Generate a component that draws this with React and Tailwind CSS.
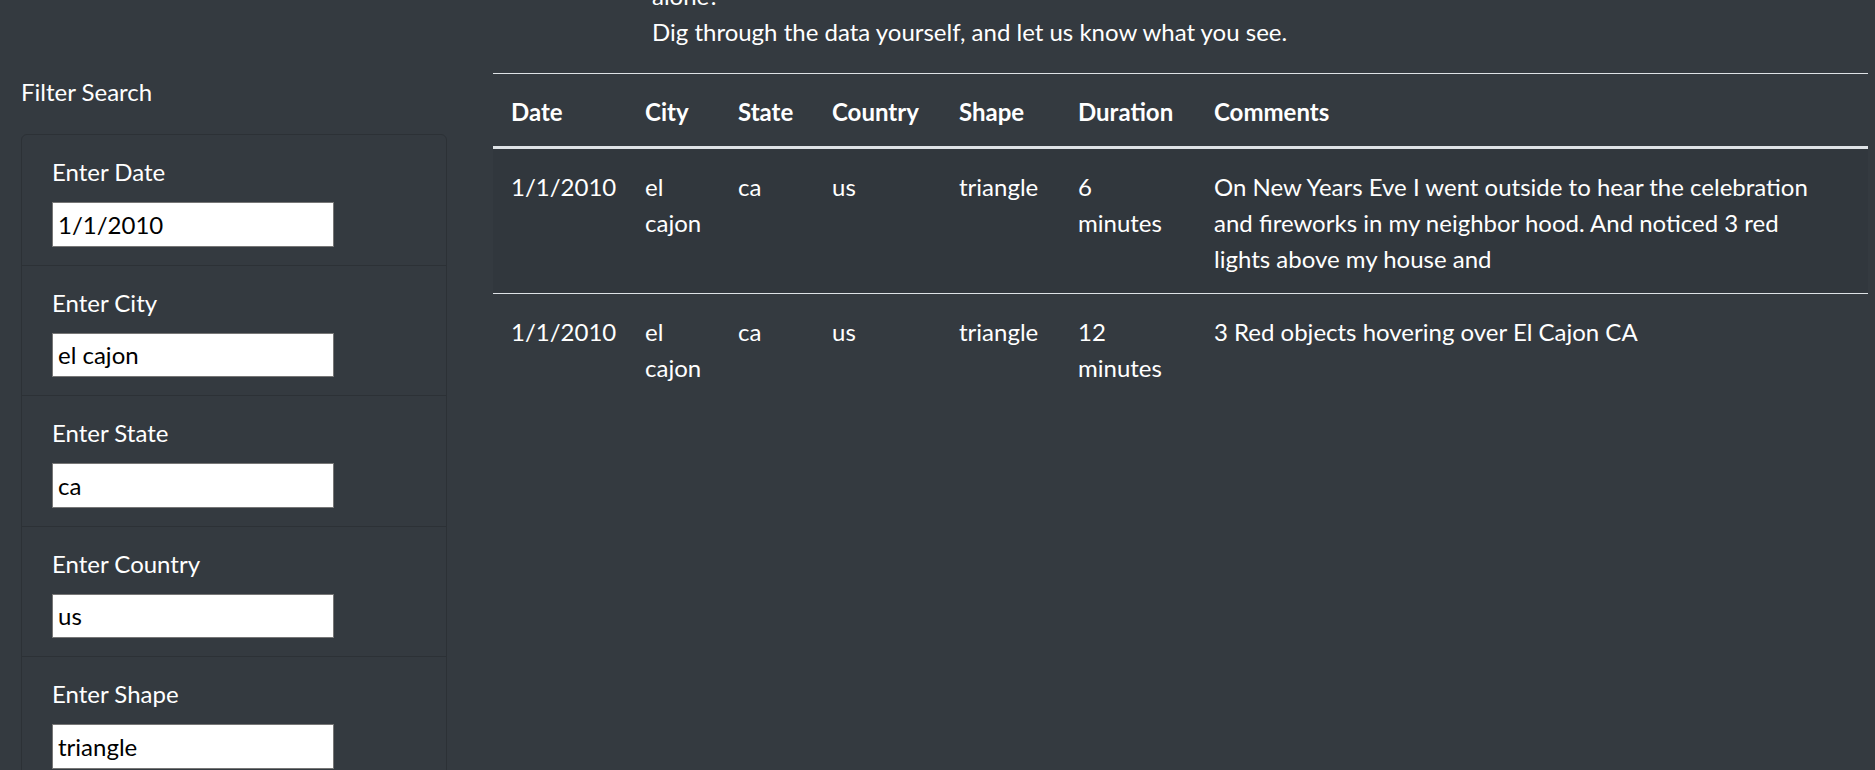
import React from "react";

const FILTERS = [
  { label: "Enter Date", value: "1/1/2010" },
  { label: "Enter City", value: "el cajon" },
  { label: "Enter State", value: "ca" },
  { label: "Enter Country", value: "us" },
  { label: "Enter Shape", value: "triangle" },
];

const COLUMNS = [
  { label: "Date", width: "w-[134px]" },
  { label: "City", width: "w-[93px]" },
  { label: "State", width: "w-[94px]" },
  { label: "Country", width: "w-[127px]" },
  { label: "Shape", width: "w-[119px]" },
  { label: "Duration", width: "w-[136px]" },
  { label: "Comments", width: "" },
];

const ROWS = [
  {
    date: "1/1/2010",
    city: "el cajon",
    state: "ca",
    country: "us",
    shape: "triangle",
    duration: "6 minutes",
    comments: [
      "On New Years Eve I went outside to hear the celebration",
      "and fireworks in my neighbor hood. And noticed 3 red",
      "lights above my house and",
    ],
  },
  {
    date: "1/1/2010",
    city: "el cajon",
    state: "ca",
    country: "us",
    shape: "triangle",
    duration: "12 minutes",
    comments: ["3 Red objects hovering over El Cajon CA"],
  },
];

export default function App() {
  return (
    <div className="h-[770px] w-[1875px] overflow-hidden bg-[#343a40] text-white font-['Lato','Open_Sans',sans-serif] text-[24px] leading-[36px]">
      {/* intro text, scrolled partly out of view */}
      <div className="-mt-[22px] pl-[652px]">
        <p>alone?</p>
        <p>Dig through the data yourself, and let us know what you see.</p>
      </div>

      <div className="mt-[23px] flex">
        <aside className="w-[470px] shrink-0 pl-[21px] pr-[23px]">
          <p className="pt-px">Filter Search</p>
          <ul className="mt-[24px] rounded-t-[6px] border border-[#2c3136]">
            {FILTERS.map((f) => (
              <li key={f.label} className="border-b border-[#2c3136] px-[30px] pt-[19px] pb-[18px]">
                <label className="mb-[12px] block">{f.label}</label>
                <input
                  type="text"
                  defaultValue={f.value}
                  className="block h-[44.5px] w-[282px] border border-[#767676] bg-white pl-[5px] text-[24px] text-black outline-none"
                />
              </li>
            ))}
          </ul>
        </aside>

        <main className="flex-1 pl-[23px] pr-[7px]">
          <table className="w-full table-fixed border-collapse text-left">
            <thead>
              <tr>
                {COLUMNS.map((c) => (
                  <th
                    key={c.label}
                    className={`${c.width} border-t border-b-[3px] border-t-[#dee2e6] border-b-[#dee2e6] px-[18px] pt-[20px] pb-[16px] align-bottom font-bold`}
                  >
                    {c.label}
                  </th>
                ))}
              </tr>
            </thead>
            <tbody>
              {ROWS.map((r, i) => (
                <tr key={i} className={i % 2 === 0 ? "bg-[#31373d]" : ""}>
                  {[r.date, r.city, r.state, r.country, r.shape, r.duration].map((v, j) => (
                    <td key={j} className="border-t border-[#dee2e6] px-[18px] pt-[20px] pb-[16px] align-top">
                      {v}
                    </td>
                  ))}
                  <td className="border-t border-[#dee2e6] px-[18px] pt-[20px] pb-[16px] align-top">
                    {r.comments.map((line) => (
                      <span key={line} className="block whitespace-nowrap">
                        {line}
                      </span>
                    ))}
                  </td>
                </tr>
              ))}
            </tbody>
          </table>
        </main>
      </div>
    </div>
  );
}
